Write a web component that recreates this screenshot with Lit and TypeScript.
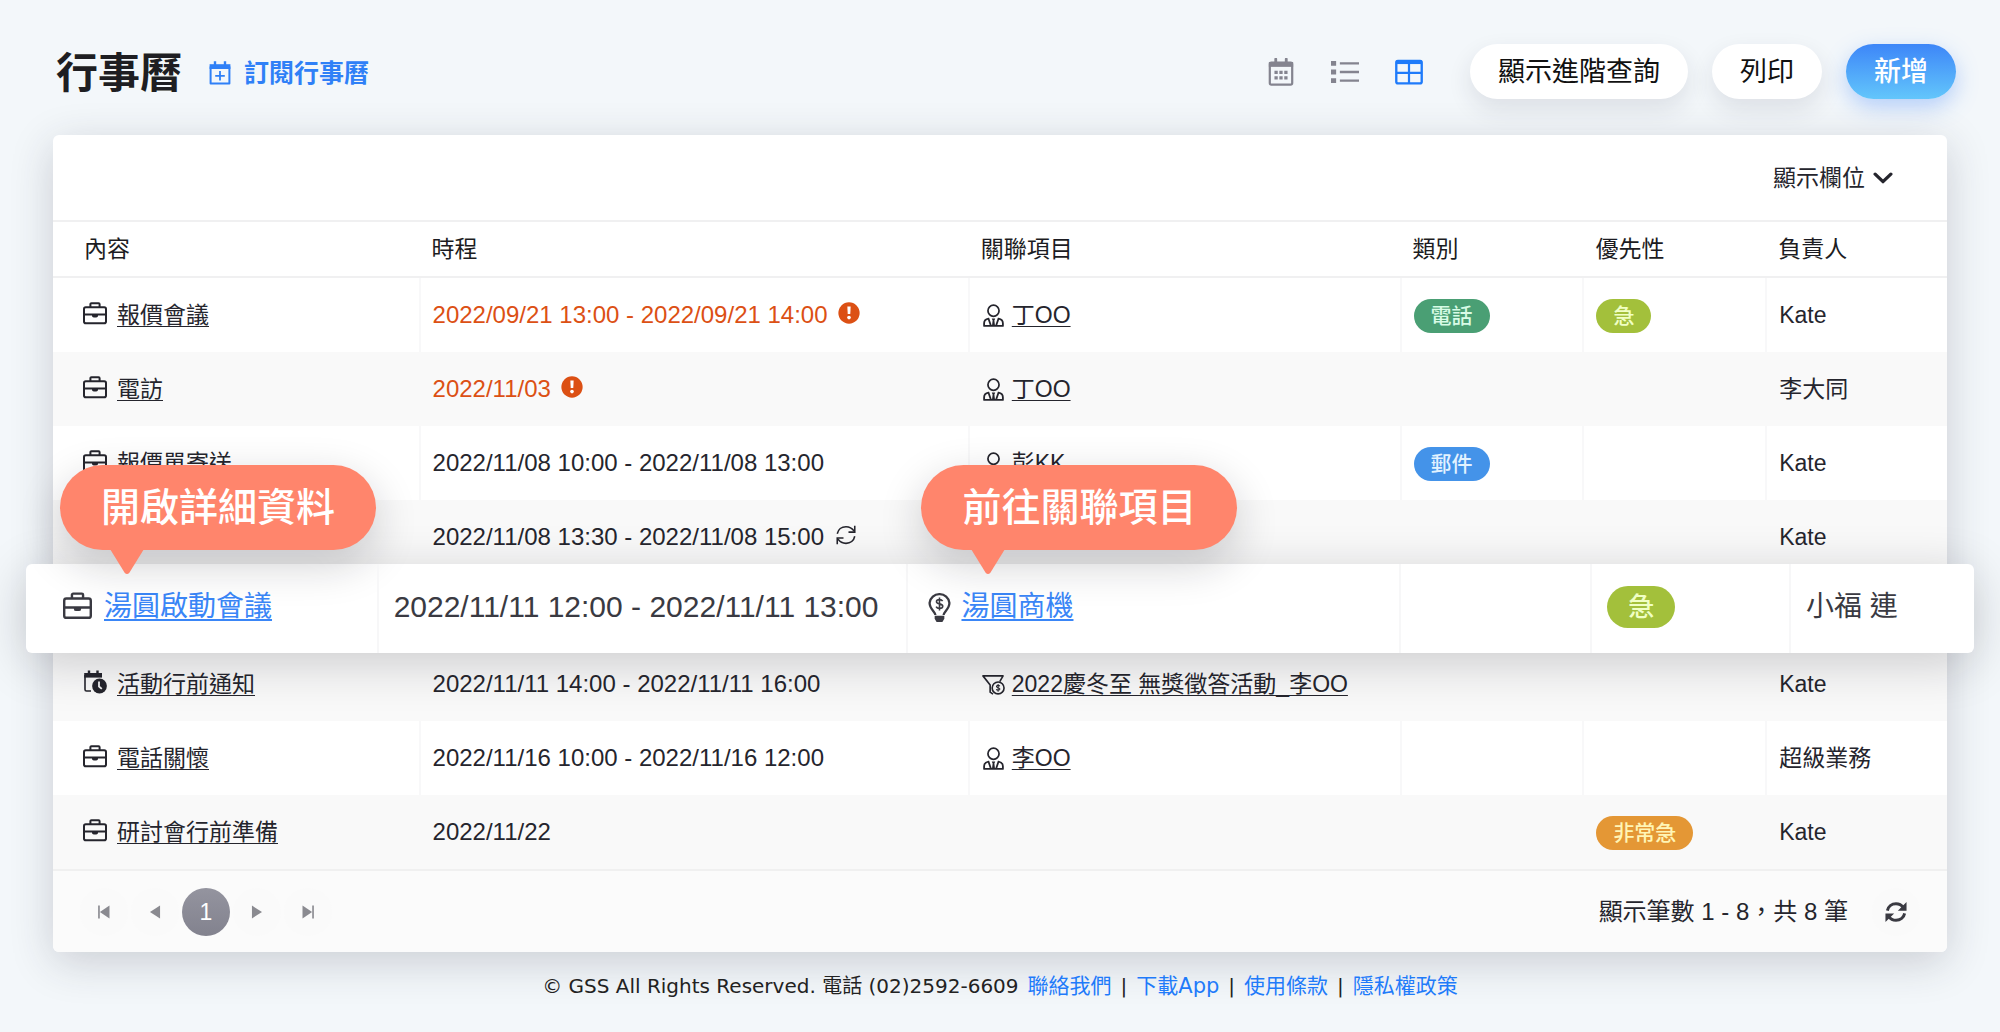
import { LitElement, html, svg, css, nothing } from "lit";
import { customElement, property } from "lit/decorators.js";

type IconName =
  | "calendarAdd" | "calendar" | "list" | "grid" | "chevron" | "briefcase" | "calendarClock"
  | "alert" | "person" | "bulb" | "funnel" | "repeat" | "refresh" | "first" | "prev" | "next" | "last";

const ICONS: Record<IconName, unknown> = {
  calendarAdd: svg`<path d="M2.600 6h18.800v16.500H2.600z" fill="none" stroke="currentColor" stroke-width="2" stroke-linejoin="round"/>
    <path d="M1.600 3.200h20.800V8H1.600z" fill="currentColor"/>
    <path d="M7 .3v4M17 .3v4" stroke="currentColor" stroke-width="2.4"/>
    <path d="M12 10v9.600M7.200 14.800h9.600" stroke="currentColor" stroke-width="1.800"/>`,
  calendar: svg`<rect x="2.400" y="4" width="19.200" height="18.800" rx="1.400" fill="none" stroke="currentColor" stroke-width="1.900"/>
    <path d="M1.600 3.400h20.800V7.600H1.600z" fill="currentColor"/>
    <path d="M7.500 .9v4M16.500 .9v4" stroke="currentColor" stroke-width="2.400" stroke-linecap="round"/>
    <path d="M6.400 11h2.800v2.800H6.400zM10.600 11h2.800v2.800h-2.800zM14.800 11h2.800v2.800h-2.800zM6.400 15.600h2.800v2.800H6.400zM10.600 15.600h2.800v2.800h-2.800zM14.800 15.600h2.800v2.800h-2.800z" fill="currentColor"/>`,
  list: svg`<path d="M0 2.500h4.400v4.200H0zM0 9.900h4.400v4.200H0zM0 17.300h4.400v4.200H0z" fill="currentColor"/>
    <path d="M7.600 4.600H24M7.600 12H24M7.600 19.400H24" stroke="currentColor" stroke-width="2.100"/>`,
  grid: svg`<rect x="1.100" y="2.400" width="21.800" height="19.400" rx="1.400" fill="none" stroke="currentColor" stroke-width="2"/>
    <path d="M1 2h22v3.200H1z" fill="currentColor"/>
    <path d="M12 4v18M1.500 12.800h21" stroke="currentColor" stroke-width="1.900"/>`,
  chevron: svg`<path d="M2.600 7.400l9.400 9 9.400-9" fill="none" stroke="currentColor" stroke-width="4" stroke-linecap="round" stroke-linejoin="round"/>`,
  briefcase: svg`<rect x="1" y="6.200" width="22" height="16" rx="1.800" fill="none" stroke="currentColor" stroke-width="2"/>
    <path d="M7.400 6V3.200a1 1 0 0 1 1-1h7.200a1 1 0 0 1 1 1V6M1 13.600h22" fill="none" stroke="currentColor" stroke-width="2"/>
    <path d="M9 13.400h6v1.400a1.800 1.800 0 0 1-1.800 1.800h-2.400A1.800 1.800 0 0 1 9 14.800z" fill="currentColor"/>`,
  calendarClock: svg`<path d="M2 5v14.500q0 1.500 1.500 1.500H8" fill="none" stroke="currentColor" stroke-width="1.600"/>
    <path d="M1.200 3H19v4.600H1.200z" fill="currentColor"/>
    <path d="M6 .5v4M14.500 .5v4" stroke="currentColor" stroke-width="2.400"/>
    <circle cx="16.500" cy="16" r="7.400" fill="currentColor"/>
    <path d="M16 11.500v5l2.800 2.400" fill="none" stroke="#f2f2f3" stroke-width="1.800"/>`,
  alert: svg`<circle cx="12" cy="12" r="11.600" fill="currentColor"/>
    <path d="M10.200 4.800h3.600l-.4 8.400h-2.800z" fill="#fff"/><circle cx="12" cy="17" r="2" fill="#fff"/>`,
  person: svg`<circle cx="12" cy="7" r="5.800" fill="none" stroke="currentColor" stroke-width="1.800"/>
    <path d="M2.200 22.900v-2.800c0-2.600 1.800-4.300 4.600-4.800L9.400 22.900M21.800 22.900v-2.800c0-2.600-1.800-4.300-4.600-4.800L14.600 22.900M1.400 22.900h21.200" fill="none" stroke="currentColor" stroke-width="1.900"/>
    <path d="M10.200 15h3.600l-.9 2.200.7 5.800h-3.200l.7-5.800z" fill="currentColor"/>`,
  bulb: svg`<path d="M8.600 18.200c0-2.600-4.800-5-4.800-10A8 8 0 0 1 12 1a8 8 0 0 1 8.200 7.200c0 5-4.800 7.400-4.800 10" fill="none" stroke="currentColor" stroke-width="1.900"/>
    <path d="M8 18.800h8v2.600L14.400 24H9.600L8 21.400z" fill="currentColor"/>
    <path d="M14.600 6.800c-.6-1-1.400-1.300-2.600-1.300-1.500 0-2.500.7-2.500 1.700 0 2.500 5.200 1.100 5.200 3.700 0 1.100-1.100 1.800-2.700 1.800-1.400 0-2.300-.5-2.800-1.500M12 3.800v10.600" fill="none" stroke="currentColor" stroke-width="1.300"/>`,
  funnel: svg`<path d="M18.500 9L22 3H1l7.500 9.500V20l3 2" fill="none" stroke="currentColor" stroke-width="1.700" stroke-linejoin="round"/>
    <circle cx="16.800" cy="15.600" r="6.200" fill="none" stroke="currentColor" stroke-width="1.700"/>
    <path d="M18.600 13.800c-.4-.7-1-.9-1.800-.9-1 0-1.700.4-1.700 1.200 0 1.700 3.600.8 3.600 2.600 0 .8-.8 1.300-1.900 1.300-.9 0-1.600-.4-1.900-1.100M16.800 11.600v8" fill="none" stroke="currentColor" stroke-width="1.100"/>`,
  repeat: svg`<path d="M1.500 10.500C2.500 5.500 6.700 2 12 2c4 0 7.500 2 9.500 5M22.500 1v7.500H15M22.500 13.500C21.500 18.500 17.300 22 12 22c-4 0-7.500-2-9.500-5M1.500 23v-7.500H9" fill="none" stroke="currentColor" stroke-width="1.900"/>`,
  refresh: svg`<path d="M2.600 10.500C3.400 6 7.300 3 12 3c3.400 0 6 1.300 8 4M21.400 13.500C20.600 18 16.700 21 12 21c-3.400 0-6-1.300-8-4" fill="none" stroke="currentColor" stroke-width="3.200"/>
    <path d="M23.500 1v9.500H14zM.5 23v-9.500H10z" fill="currentColor"/>`,
  first: svg`<path d="M6.500 5v14" stroke="currentColor" stroke-width="1.800"/><path d="M18 5v14L7.500 12z" fill="currentColor"/>`,
  prev: svg`<path d="M17.500 5v14L6.500 12z" fill="currentColor"/>`,
  next: svg`<path d="M6.500 5v14L17.500 12z" fill="currentColor"/>`,
  last: svg`<path d="M17.500 5v14" stroke="currentColor" stroke-width="1.800"/><path d="M6 5v14L16.500 12z" fill="currentColor"/>`,
};

const icon = (name: IconName, cls = "") =>
  html`<svg class="icon ${cls}" viewBox="0 0 24 24" aria-hidden="true">${ICONS[name]}</svg>`;

interface LinkItem { icon: IconName; text: string; }
interface Tag { text: string; tone: "green" | "lime" | "blue" | "orange"; }
interface Entry {
  subject?: LinkItem;
  time: string;
  overdue?: boolean;
  repeats?: boolean;
  related?: LinkItem;
  category?: Tag;
  priority?: Tag;
  owner: string;
  focused?: boolean;
}

const ENTRIES: Entry[] = [
  { subject: { icon: "briefcase", text: "報價會議" }, time: "2022/09/21 13:00 - 2022/09/21 14:00", overdue: true, related: { icon: "person", text: "丁OO" }, category: { text: "電話", tone: "green" }, priority: { text: "急", tone: "lime" }, owner: "Kate" },
  { subject: { icon: "briefcase", text: "電訪" }, time: "2022/11/03", overdue: true, related: { icon: "person", text: "丁OO" }, owner: "李大同" },
  { subject: { icon: "briefcase", text: "報價單寄送" }, time: "2022/11/08 10:00 - 2022/11/08 13:00", related: { icon: "person", text: "彭KK" }, category: { text: "郵件", tone: "blue" }, owner: "Kate" },
  { time: "2022/11/08 13:30 - 2022/11/08 15:00", repeats: true, owner: "Kate" },
  { subject: { icon: "briefcase", text: "湯圓啟動會議" }, time: "2022/11/11 12:00 - 2022/11/11 13:00", related: { icon: "bulb", text: "湯圓商機" }, priority: { text: "急", tone: "lime" }, owner: "小福 連", focused: true },
  { subject: { icon: "calendarClock", text: "活動行前通知" }, time: "2022/11/11 14:00 - 2022/11/11 16:00", related: { icon: "funnel", text: "2022慶冬至 無獎徵答活動_李OO" }, owner: "Kate" },
  { subject: { icon: "briefcase", text: "電話關懷" }, time: "2022/11/16 10:00 - 2022/11/16 12:00", related: { icon: "person", text: "李OO" }, owner: "超級業務" },
  { subject: { icon: "briefcase", text: "研討會行前準備" }, time: "2022/11/22", priority: { text: "非常急", tone: "orange" }, owner: "Kate" },
];

const COLUMNS = ["內容", "時程", "關聯項目", "類別", "優先性", "負責人"];
const FOOTER_LINKS = ["聯絡我們", "下載App", "使用條款", "隱私權政策"];

const base = css`
  * { box-sizing: border-box; }
  .icon { display: block; flex: none; width: 24px; height: 24px; }
  button {
    font: inherit; color: inherit; border: 0; padding: 0; background: none; cursor: pointer;
  }
`;

@customElement("schedule-table")
export class ScheduleTable extends LitElement {
  @property({ attribute: false }) entries: Entry[] = [];

  static styles = [base, css`
    :host { display: block; }
    table { width: 100%; border-collapse: separate; border-spacing: 0; table-layout: fixed; }
    th, td { text-align: left; font-weight: 400; }
    .main > thead th {
      height: 56px; padding: 0 0 0 13px; border-bottom: 2px solid #f0f0f1; color: #1c1c22; font-size: 23px; line-height: 32px;
    }
    .main > tbody > .row > td {
      height: 74px; padding: 0 0 0 12px; border-left: 2px solid #f8f8f9;
    }
    .main > tbody > .row:nth-child(even) > td { background: #f9f9f9; border-left-color: #f9f9f9; }
    .main > thead th:first-child { padding-left: 31px; }
    .main > tbody > .row > td:first-child { padding-left: 28px; border-left-color: transparent; }
    .w-subject { width: 19.3%; }
    .w-time { width: 29%; }
    .w-related { width: 22.8%; }
    .w-tag { width: 9.65%; }
    .f-subject { width: 18%; }
    .f-time { width: 27.2%; }
    .f-related { width: 25.3%; }
    .f-category { width: 9.8%; }
    .f-priority { width: 10.2%; }

    .cell { display: flex; align-items: center; gap: 10px; white-space: nowrap; line-height: 34px; }
    .time { font-size: 24px; }
    .overdue { color: #dc5014; }
    .subject .icon, .time .icon { margin-bottom: 4px; }
    .time .status { width: 22px; height: 22px; }
    .time .repeat { width: 20px; height: 20px; margin-left: 2px; }
    .related { gap: 7px; }
    .related .icon { width: 23px; height: 23px; }
    a {
      color: inherit; text-decoration: underline; text-decoration-thickness: 1px;
      text-underline-offset: 3px; text-decoration-skip-ink: none;
    }
    .tag {
      display: inline-block; vertical-align: middle; padding: 0 17px; border-radius: 21px;
      font-size: 21px; line-height: 34px; font-weight: 500; white-space: nowrap;
    }
    .green { background: #4a9f74; color: #d8fbe6; }
    .lime { background: #a3c03b; color: #f0ffc4; }
    .blue { background: #4493e9; color: #e2f2ff; }
    .orange { background: #e49735; color: #fff5b5; }

    .slot { position: relative; height: 73px; padding: 0; }
    .focus {
      position: absolute; top: -10px; left: -27px; right: -27px;
      background: #fff; border-radius: 6px; color: #3a3a42; font-size: 28px;
      box-shadow: 0 10px 50px rgba(20, 20, 30, 0.2);
    }
    .focus td { position: relative; height: 89px; padding: 0 0 3px 15px; border-left: 2px solid #f7f7f8; }
    .focus td:first-child { padding-left: 37px; border-left: 0; }
    .focus .time { font-size: 30px; }
    .focus .subject .icon { width: 29px; height: 29px; }
    .focus .cell { gap: 12px; line-height: 42px; }
    .focus .related { gap: 7px; padding-left: 2px; }
    .focus .related .icon { width: 29px; height: 29px; }
    .focus a { color: #3a86f7; text-decoration-thickness: 2px; }
    .focus .tag { font-size: 26px; line-height: 42px; padding: 0 21px; }

    .hint {
      position: absolute; bottom: 103px; padding: 0 41px; border-radius: 43px;
      background: #ff856c; color: #fff; font-size: 39px; line-height: 85px; font-weight: 500;
      white-space: nowrap; box-shadow: 0 14px 44px rgba(20, 20, 30, 0.2);
    }
    .tail { position: absolute; top: 84px; left: 50px; width: 34px; height: 26px; }
    .hint-subject { left: 34px; }
    .hint-related { left: 13px; }
  `];

  private link(kind: string, item?: LinkItem) {
    return item
      ? html`<div class="cell ${kind}">${icon(item.icon)}<a href="#">${item.text}</a></div>`
      : nothing;
  }

  private tag(tag?: Tag) {
    return tag ? html`<span class="tag ${tag.tone}">${tag.text}</span>` : nothing;
  }

  private time(e: Entry) {
    return html`<div class="cell time ${e.overdue ? "overdue" : ""}">
      <span>${e.time}</span>${e.overdue ? icon("alert", "status") : nothing}${e.repeats ? icon("repeat", "repeat") : nothing}
    </div>`;
  }

  private hint(kind: string, text: string) {
    return html`<div class="hint ${kind}" role="tooltip">${text}
      <svg class="tail" viewBox="0 0 34 26" aria-hidden="true"><path d="M0 0h34L19.500 23.500q-2.500 3-5 0z" fill="#ff856c"/></svg>
    </div>`;
  }

  private row(e: Entry) {
    return html`<tr class="row">
      <td>${this.link("subject", e.subject)}</td>
      <td>${this.time(e)}</td>
      <td>${this.link("related", e.related)}</td>
      <td>${this.tag(e.category)}</td>
      <td>${this.tag(e.priority)}</td>
      <td>${e.owner}</td>
    </tr>`;
  }

  private focusedRow(e: Entry) {
    return html`<tr>
      <td class="slot" colspan="6">
        <div class="focus">
          <table>
            <colgroup>
              <col class="f-subject"><col class="f-time"><col class="f-related"><col class="f-category"><col class="f-priority"><col>
            </colgroup>
            <tbody><tr>
              <td>${this.link("subject", e.subject)}${this.hint("hint-subject", "開啟詳細資料")}</td>
              <td>${this.time(e)}</td>
              <td>${this.link("related", e.related)}${this.hint("hint-related", "前往關聯項目")}</td>
              <td>${this.tag(e.category)}</td>
              <td>${this.tag(e.priority)}</td>
              <td>${e.owner}</td>
            </tr></tbody>
          </table>
        </div>
      </td>
    </tr>`;
  }

  render() {
    return html`<table class="main">
      <colgroup>
        <col class="w-subject"><col class="w-time"><col class="w-related"><col class="w-tag"><col class="w-tag"><col>
      </colgroup>
      <thead><tr>${COLUMNS.map((c) => html`<th scope="col">${c}</th>`)}</tr></thead>
      <tbody>${this.entries.map((e) => (e.focused ? this.focusedRow(e) : this.row(e)))}</tbody>
    </table>`;
  }
}

@customElement("app-root")
export class AppRoot extends LitElement {
  static styles = [base, css`
    :host {
      display: block; min-height: 100vh; background: #f3f7fa; color: #25252d;
      font-family: "Liberation Sans", "Noto Sans CJK TC", sans-serif; font-size: 23px; line-height: 34px;
    }
    .top { display: flex; align-items: center; padding: 44px 44px 36px 56px; }
    h1 { margin: 0; padding-top: 4px; font-size: 42px; line-height: 51px; font-weight: 700; color: #1e1e22; }
    .subscribe {
      display: flex; align-items: center; gap: 12px; margin-left: 26px; padding-top: 3px;
      color: #2f80f7; font-size: 25px; font-weight: 700; text-decoration: none;
    }
    .views { display: flex; align-items: center; gap: 36px; margin: 0 47px 0 auto; color: #84848f; }
    .views .icon { width: 28px; height: 28px; }
    .views .active { color: #1f7bfa; }
    .actions { display: flex; gap: 24px; }
    .pill {
      height: 55px; padding: 2px 28px 0; border-radius: 28px; background: #fff; color: #111;
      font-size: 27px; line-height: 53px; box-shadow: 0 10px 24px rgba(40, 40, 60, 0.11);
    }
    .primary {
      background: linear-gradient(#3d86f8, #63c6fb); color: #fff; font-weight: 500;
      box-shadow: 0 8px 22px rgba(60, 130, 250, 0.35);
    }
    .card {
      margin: 0 53px; background: #fff; border-radius: 6px;
      box-shadow: 0 10px 44px rgba(40, 40, 60, 0.2);
    }
    .tools { display: flex; justify-content: flex-end; align-items: center; height: 87px; padding-right: 54px; border-bottom: 2px solid #f0f0f1; }
    .columns { display: flex; align-items: center; gap: 8px; }
    .columns .icon { width: 20px; height: 20px; }
    .foot {
      display: flex; align-items: center; justify-content: space-between;
      height: 83px; padding: 0 27px; background: #fbfbfb; border-top: 2px solid #f0f0f0; border-radius: 0 0 6px 6px;
    }
    .pager { display: flex; gap: 3px; }
    .round {
      display: flex; align-items: center; justify-content: center; width: 48px; height: 48px;
      border-radius: 50%; background: #fafafa; color: #8a8a90;
    }
    .round .icon { width: 22px; height: 22px; }
    .current { background: linear-gradient(#94949f, #82828e); color: #fff; }
    .count { display: flex; align-items: center; gap: 24px; font-size: 24px; }
    .count .round { color: #3a3a42; }
    .legal {
      display: flex; justify-content: center; align-items: center; gap: 9px; padding: 17px 0 29px;
      font-family: "DejaVu Sans", "Noto Sans CJK TC", sans-serif; font-size: 20px; color: #222;
    }
    .legal a { color: #1f7bfa; font-size: 21px; text-decoration: none; }
  `];

  render() {
    return html`
      <header class="top">
        <h1>行事曆</h1>
        <a class="subscribe" href="#">${icon("calendarAdd")}訂閱行事曆</a>
        <nav class="views" aria-label="檢視">
          <button aria-label="月曆">${icon("calendar")}</button>
          <button aria-label="清單">${icon("list")}</button>
          <button class="active" aria-label="表格">${icon("grid")}</button>
        </nav>
        <div class="actions">
          <button class="pill">顯示進階查詢</button>
          <button class="pill">列印</button>
          <button class="pill primary">新增</button>
        </div>
      </header>
      <main class="card">
        <div class="tools"><button class="columns">顯示欄位${icon("chevron")}</button></div>
        <schedule-table .entries=${ENTRIES}></schedule-table>
        <div class="foot">
          <nav class="pager" aria-label="分頁">
            <button class="round" aria-label="第一頁">${icon("first")}</button>
            <button class="round" aria-label="上一頁">${icon("prev")}</button>
            <button class="round current" aria-current="page">1</button>
            <button class="round" aria-label="下一頁">${icon("next")}</button>
            <button class="round" aria-label="最後一頁">${icon("last")}</button>
          </nav>
          <div class="count"><span>顯示筆數 1 - 8，共 8 筆</span><button class="round" aria-label="重新整理">${icon("refresh")}</button></div>
        </div>
      </main>
      <footer class="legal">
        <span>© GSS All Rights Reserved. 電話 (02)2592-6609</span>
        ${FOOTER_LINKS.map((t, i) => html`${i ? html`<span>|</span>` : nothing}<a href="#">${t}</a>`)}
      </footer>
    `;
  }
}
